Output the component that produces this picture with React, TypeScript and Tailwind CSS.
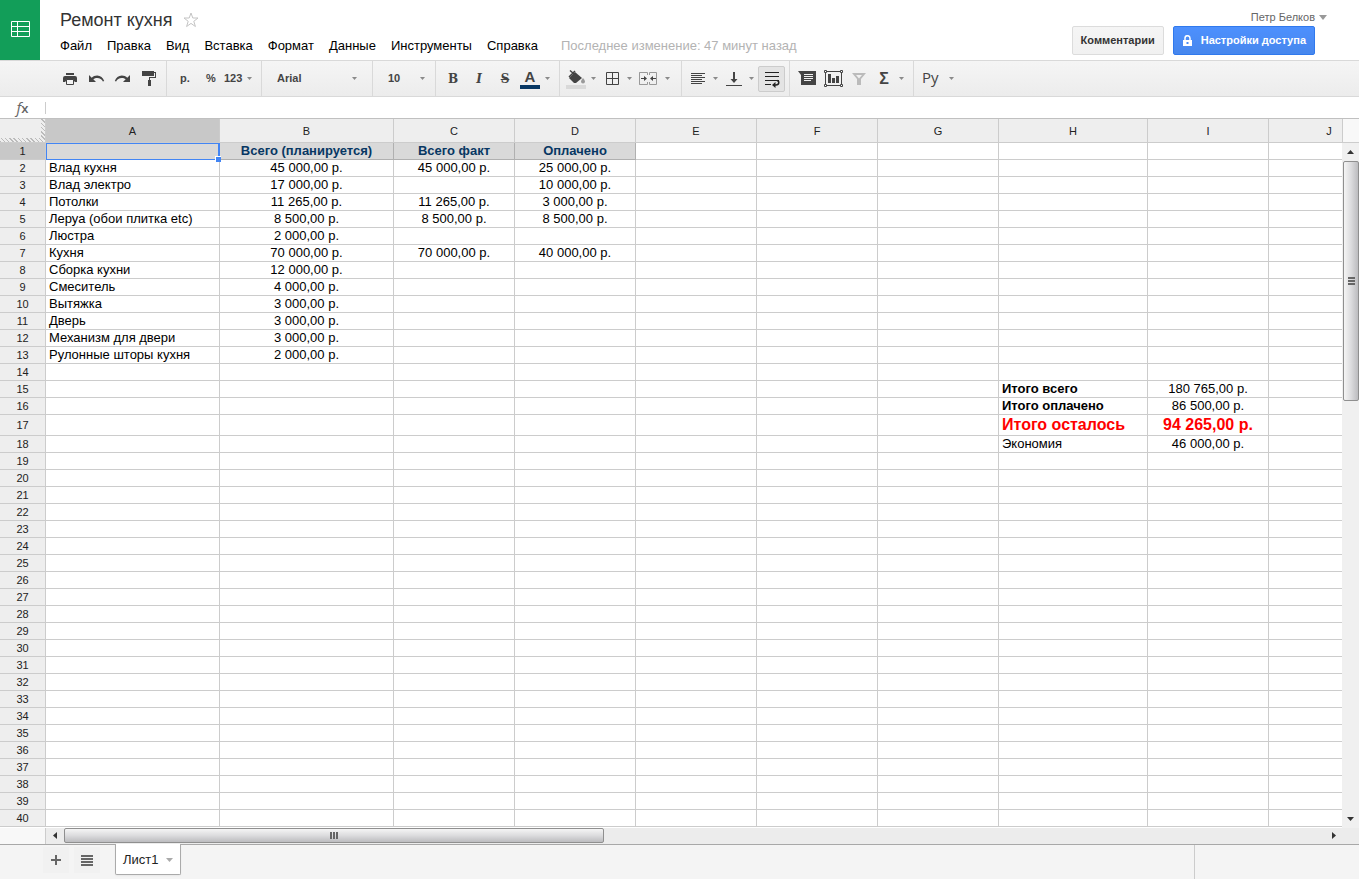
import React from 'react';

const MENU = ['Файл', 'Правка', 'Вид', 'Вставка', 'Формат', 'Данные', 'Инструменты', 'Справка'];

const COLUMNS = [
  { name: 'A', width: 'w-[174px]' },
  { name: 'B', width: 'w-[174px]' },
  { name: 'C', width: 'w-[121px]' },
  { name: 'D', width: 'w-[121px]' },
  { name: 'E', width: 'w-[121px]' },
  { name: 'F', width: 'w-[121px]' },
  { name: 'G', width: 'w-[121px]' },
  { name: 'H', width: 'w-[149px]' },
  { name: 'I', width: 'w-[121px]' },
  { name: 'J', width: 'w-[121px]' },
];

const CELLS: Record<number, Record<string, string>> = {
  1: { B: 'Всего (планируется)', C: 'Всего факт', D: 'Оплачено' },
  2: { A: 'Влад кухня', B: '45 000,00 р.', C: '45 000,00 р.', D: '25 000,00 р.' },
  3: { A: 'Влад электро', B: '17 000,00 р.', D: '10 000,00 р.' },
  4: { A: 'Потолки', B: '11 265,00 р.', C: '11 265,00 р.', D: '3 000,00 р.' },
  5: { A: 'Леруа (обои плитка etc)', B: '8 500,00 р.', C: '8 500,00 р.', D: '8 500,00 р.' },
  6: { A: 'Люстра', B: '2 000,00 р.' },
  7: { A: 'Кухня', B: '70 000,00 р.', C: '70 000,00 р.', D: '40 000,00 р.' },
  8: { A: 'Сборка кухни', B: '12 000,00 р.' },
  9: { A: 'Смеситель', B: '4 000,00 р.' },
  10: { A: 'Вытяжка', B: '3 000,00 р.' },
  11: { A: 'Дверь', B: '3 000,00 р.' },
  12: { A: 'Механизм для двери', B: '3 000,00 р.' },
  13: { A: 'Рулонные шторы кухня', B: '2 000,00 р.' },
  15: { H: 'Итого всего', I: '180 765,00 р.' },
  16: { H: 'Итого оплачено', I: '86 500,00 р.' },
  17: { H: 'Итого осталось', I: '94 265,00 р.' },
  18: { H: 'Экономия', I: '46 000,00 р.' },
};

const ROWS = Array.from({ length: 40 }, (_, i) => i + 1);

const Caret: React.FC = () => (
  <svg width="5" height="3" viewBox="0 0 5 3" className="shrink-0">
    <path d="M0 0h5L2.5 3z" fill="#8a8a8a" />
  </svg>
);

const Icon: React.FC<{ children: React.ReactNode }> = ({ children }) => (
  <svg width="20" height="20" viewBox="0 0 20 20" fill="#444" className="shrink-0">
    {children}
  </svg>
);

const Group: React.FC<{ className: string; children: React.ReactNode }> = ({ className, children }) => (
  <div className={`flex shrink-0 items-center border-r border-[#d9d9d9] ${className}`}>{children}</div>
);

const ToolButton: React.FC<{ label: string; children: React.ReactNode }> = ({ label, children }) => (
  <button aria-label={label} className="flex h-[26px] w-[26px] items-center justify-center">
    {children}
  </button>
);

const DropButton: React.FC<{ label: string; children: React.ReactNode }> = ({ label, children }) => (
  <button aria-label={label} className="flex h-[26px] w-9 items-center justify-between pr-1 pl-0.5">
    {children}
    <Caret />
  </button>
);

const Header: React.FC = () => (
  <header className="flex h-[60px] shrink-0 bg-white">
    <a href="#" aria-label="Таблицы" className="block w-10 bg-[#129e59]">
      <svg width="40" height="60" viewBox="0 0 40 60" fill="none" stroke="#fff">
        <path d="M11.5 21.5h18v15h-18zM17.5 21.5v15M11.5 26.5h18M11.5 31.5h18" />
      </svg>
    </a>
    <div className="flex-1 pt-2.5 pl-5">
      <div className="flex items-center gap-2.5">
        <h1 className="text-lg leading-5 text-[#333]">Ремонт кухня</h1>
        <button aria-label="Пометить">
          <svg width="16" height="16" viewBox="0 0 16 16" fill="none" stroke="#c4c4c4">
            <path d="M8 1l1.8 5h5.2l-4.2 3.3 1.6 5.2L8 11.4l-4.4 3.1 1.6-5.2L1 6h5.2z" />
          </svg>
        </button>
      </div>
      <nav className="mt-2 flex gap-[15px] text-[13px] leading-4 whitespace-nowrap">
        {MENU.map((item) => (
          <button key={item}>{item}</button>
        ))}
        <span className="pl-2 text-[#b3b3b3]">Последнее изменение: 47 минут назад</span>
      </nav>
    </div>
    <div className="flex flex-col items-end pt-2.5 pr-11">
      <button className="-mr-3 flex items-center gap-1 text-[11px] leading-[14px] text-[#666]">
        Петр Белков
        <svg width="8" height="5" viewBox="0 0 8 5">
          <path d="M0 0h8L4 5z" fill="#999" />
        </svg>
      </button>
      <div className="mt-0.5 flex gap-[9px] text-[11px] font-bold">
        <button className="h-[29px] rounded-xs border border-[#dcdcdc] bg-linear-to-b from-[#f5f5f5] to-[#f1f1f1] px-2 text-[#333]">
          Комментарии
        </button>
        <button className="flex h-[29px] items-center gap-2 rounded-xs border border-[#3079ed] bg-linear-to-b from-[#4d90fe] to-[#4787ed] px-2 text-white">
          <svg width="11" height="12" viewBox="0 0 11 12">
            <path d="M3 6V3.2a2.5 2.5 0 0 1 5 0V6" fill="none" stroke="#fff" strokeWidth="1.5" />
            <path d="M1 5h9v6H1zM4.5 7v2h2V7z" fill="#fff" fillRule="evenodd" />
          </svg>
          Настройки доступа
        </button>
      </div>
    </div>
  </header>
);

const Toolbar: React.FC = () => (
  <div className="flex h-[37px] shrink-0 border-y border-[#d9d9d9] bg-linear-to-b from-[#f5f5f5] to-[#ececec] text-[11px] font-bold text-[#444]">
    <Group className="pr-[5px] pl-[57px]">
      <ToolButton label="Печать">
        <Icon>
          <path d="M6 4h8v2H6zM5 7h10a2 2 0 0 1 2 2v4h-2v-3H5v3H3V9a2 2 0 0 1 2-2z" />
          <path d="M3 9h14v3.500H3z" />
          <path d="M6.500 10.500h7v5h-7z" fill="#f4f4f4" stroke="#444" />
        </Icon>
      </ToolButton>
      <ToolButton label="Отменить">
        <Icon>
          <path d="M3 6v7h7L7.300 10.300C8.500 9.400 9.700 8.900 11.200 8.900c2.600 0 4.700 1.300 5.700 3.600l1.300-.5C17 8.700 14.500 6.600 11.200 6.600c-2.200 0-4 .7-5.500 2.100z" />
        </Icon>
      </ToolButton>
      <ToolButton label="Повторить">
        <Icon>
          <path d="M18 6v7h-7l2.700-2.700C12.500 9.400 11.300 8.900 9.800 8.900c-2.600 0-4.700 1.300-5.700 3.600L2.800 12C4 8.700 6.500 6.600 9.800 6.600c2.200 0 4 .7 5.500 2.100z" />
        </Icon>
      </ToolButton>
      <ToolButton label="Копировать форматирование">
        <Icon>
          <path d="M4 2h12v5H4zM16 3h2v6h-6v2h-1V8h6V4h-1zM10 11h3v6h-3z" />
        </Icon>
      </ToolButton>
    </Group>
    <Group className="px-[5px]">
      <ToolButton label="Денежный формат">р.</ToolButton>
      <ToolButton label="Процентный формат">%</ToolButton>
      <button className="flex h-[26px] w-8 items-center justify-between pr-1">
        123
        <Caret />
      </button>
    </Group>
    <Group className="px-[5px]">
      <div className="relative flex w-[100px] items-center">
        <select aria-label="Шрифт" className="h-[26px] w-full appearance-none pl-2.5">
          <option>Arial</option>
        </select>
        <span className="pointer-events-none absolute right-2.5">
          <Caret />
        </span>
      </div>
    </Group>
    <Group className="px-[5px]">
      <div className="relative flex w-[52px] items-center">
        <select aria-label="Размер шрифта" className="h-[26px] w-full appearance-none pl-2.5">
          <option>10</option>
        </select>
        <span className="pointer-events-none absolute right-[5px]">
          <Caret />
        </span>
      </div>
    </Group>
    <Group className="pr-[5px] pl-1">
      <ToolButton label="Полужирный">
        <span className="font-['DejaVu_Serif',serif] text-xs">B</span>
      </ToolButton>
      <ToolButton label="Курсив">
        <span className="font-['DejaVu_Serif',serif] text-xs italic">I</span>
      </ToolButton>
      <ToolButton label="Зачеркнутый">
        <span className="font-['DejaVu_Serif',serif] text-xs line-through">S</span>
      </ToolButton>
      <DropButton label="Цвет текста">
        <span className="w-5 border-b-4 border-[#073763] text-center text-[15px] leading-4">A</span>
      </DropButton>
    </Group>
    <Group className="pr-[5px] pl-1">
      <DropButton label="Цвет заливки">
        <Icon>
          <path d="M4 1.500l7 6M9 2L3 8" fill="none" stroke="#444" strokeWidth="1.500" />
          <path d="M9 3l7 6-6 5H8L3 9z" />
          <path d="M17 9c1.500 2 2 2.800 2 3.600a2 2 0 0 1-4 0c0-.8.500-1.600 2-3.600z" fill="#999" />
          <path d="M0 16h20v4H0z" fill="#d9d9d9" />
        </Icon>
      </DropButton>
      <DropButton label="Границы">
        <Icon>
          <path d="M4.500 3.500h12v12h-12zM10.500 3.500v12M4.500 9.500h12" fill="none" stroke="#444" />
        </Icon>
      </DropButton>
      <button aria-label="Объединить ячейки" className="flex h-[26px] w-10 items-center justify-between pr-1.5 pl-0.5">
        <Icon>
          <path d="M9.500 6V3.500h-8V6M1.500 13v2.500h8V13M1.500 3.500v12M18.500 3.500v12M18.500 3.500h-7V6M11.500 13v2.500h7" fill="none" stroke="#999" />
          <path d="M3 9h3V7l3 2.500L6 12v-2H3zM18 9h-3V7l-3 2.500 3 2.500v-2h3z" />
        </Icon>
        <Caret />
      </button>
    </Group>
    <Group className="px-1">
      <DropButton label="Выравнивание по горизонтали">
        <Icon>
          <path d="M3 4h14v1H3zM3 6h11v1H3zM3 8h14v1H3zM3 10h11v1H3zM3 12h14v1H3zM3 14h11v1H3z" />
        </Icon>
      </DropButton>
      <DropButton label="Выравнивание по вертикали">
        <Icon>
          <path d="M9 3h2v7h2.500L10 14l-3.500-4H9zM2 16h16v1H2z" />
        </Icon>
      </DropButton>
      <button
        aria-label="Перенос текста"
        className="flex h-[26px] w-[27px] items-center justify-center rounded-xs border border-[#ccc] bg-[#e4e4e4]"
      >
        <Icon>
          <path d="M3 3h14v1H3zM3 7h14v1H3zM3 11h14v1H3zM3 15h6v1H3z" fill="#222" />
          <path d="M15 11.500c2.500.500 2.500 4.500-1 4.500h-2" fill="none" stroke="#222" strokeWidth="1.500" />
          <path d="M13.500 13v6l-3.500-3z" fill="#222" />
        </Icon>
      </button>
    </Group>
    <Group className="pr-[5px] pl-1">
      <ToolButton label="Комментарий">
        <Icon>
          <path d="M1 2h18v14H4V6zM7 5v1h9V5zM7 7v1h9V7zM7 9v1h9V9zM7 11v1h7v-1z" fillRule="evenodd" />
        </Icon>
      </ToolButton>
      <ToolButton label="Диаграмма">
        <Icon>
          <path d="M2.500 2.500h16v14h-16z" fill="none" stroke="#444" />
          <path d="M5 5h3v9H5zM9 9h3v5H9zM13 7h3v7h-3z" />
          <path d="M1.500 1.500h2v2h-2zM17.500 1.500h2v2h-2zM1.500 15.500h2v2h-2zM17.500 15.500h2v2h-2z" fill="#fff" stroke="#444" />
        </Icon>
      </ToolButton>
      <ToolButton label="Фильтр">
        <Icon>
          <path d="M3 4h14l-5 6v6H8v-6zM7 6l3 3.500L13 6z" fill="#bbb" fillRule="evenodd" />
        </Icon>
      </ToolButton>
      <DropButton label="Функции">
        <span className="w-5 text-center text-base">Σ</span>
      </DropButton>
    </Group>
    <div className="flex items-center pl-[5px]">
      <button aria-label="Способ ввода" className="flex h-[26px] w-[39px] items-center justify-between pr-1 pl-[3px]">
        <span className="pb-1 font-['Open_Sans',sans-serif] text-[15px] leading-5 font-medium">Ру</span>
        <Caret />
      </button>
    </div>
  </div>
);

const FormulaBar: React.FC = () => (
  <div className="flex h-[22px] shrink-0 items-center border-b border-[#c0c0c0] bg-white">
    <label htmlFor="formula" className="w-[45px] text-center font-['Open_Sans',sans-serif] text-[15px] leading-5 text-[#666]">
      <i>f</i>
      <span className="text-[13px] font-semibold">x</span>
    </label>
    <input id="formula" className="h-3 flex-1 border-l border-[#ccc] px-1 text-[13px] outline-none" />
  </div>
);

const cellStyle = (row: number, col: string) => {
  const align = col === 'A' || col === 'H' ? 'text-left' : 'text-center';
  if (row === 1 && col <= 'D') {
    return 'border-[#b0b0b0] bg-[#d9d9d9] text-center font-bold text-[#073763]';
  }
  if (row === 17) return `border-[#ccc] text-base leading-5 font-bold text-[#f00] ${align}`;
  if (col === 'H' && (row === 15 || row === 16)) return `border-[#ccc] font-bold ${align}`;
  return `border-[#ccc] ${align}`;
};

const Sheet: React.FC = () => (
  <div className="min-w-0 flex-1 overflow-hidden bg-white">
    <table className="w-[1390px] table-fixed border-separate border-spacing-0 text-[13px] leading-4 whitespace-nowrap">
      <thead className="text-[11px] text-[#222]">
        <tr>
          <th className="h-6 w-[46px] border-r border-b border-[#ccc] bg-[repeating-linear-gradient(45deg,#bbb_0_1px,#eee_1px_3px)] p-0 pr-1 pb-1">
            <div className="h-[19px] bg-[#eee]" />
          </th>
          {COLUMNS.map(({ name, width }) => (
            <th
              key={name}
              scope="col"
              className={`h-6 border-r border-b border-[#ccc] p-0 font-normal ${width} ${name === 'A' ? 'bg-[#c8c8c8]' : 'bg-[#eee]'}`}
            >
              {name}
            </th>
          ))}
        </tr>
      </thead>
      <tbody>
        {ROWS.map((row) => (
          <tr key={row}>
            <th
              scope="row"
              className={`border-r border-b border-[#ccc] p-0 text-[11px] leading-4 font-normal text-[#222] ${row === 17 ? 'h-[21px]' : 'h-[17px]'} ${row === 1 ? 'bg-[#c8c8c8]' : 'bg-[#eee]'}`}
            >
              {row}
            </th>
            {COLUMNS.map(({ name }) => (
              <td key={name} className={`relative border-r border-b px-[3px] py-0 ${cellStyle(row, name)}`}>
                {CELLS[row]?.[name]}
                {row === 1 && name === 'A' && (
                  <div className="absolute inset-0 -right-px -bottom-px z-10 border border-r-2 border-[#4285f4]">
                    <div className="absolute -right-[3px] -bottom-[3px] h-1.5 w-1.5 border-t border-l border-white bg-[#4285f4]" />
                  </div>
                )}
              </td>
            ))}
          </tr>
        ))}
      </tbody>
    </table>
  </div>
);

const VerticalScroll: React.FC = () => (
  <div className="flex w-[17px] shrink-0 flex-col bg-[#f0f0f0]">
    <div className="h-6 border-b border-l border-[#ccc] bg-[#f8f8f8]" />
    <button aria-label="Вверх" className="flex h-[18px] items-center justify-center">
      <svg width="7" height="4" viewBox="0 0 7 4">
        <path d="M3.500 0L7 4H0z" fill="#333" />
      </svg>
    </button>
    <div className="flex-1 pl-px">
      <div className="flex h-[37%] items-center justify-center rounded-xs border border-[#8f8f8f] bg-linear-to-r from-[#f5f5f5] via-[#dcdcde] to-[#bcbcbf]">
        <svg width="7" height="8" viewBox="0 0 7 8">
          <path d="M0 0h7v2H0zM0 3h7v2H0zM0 6h7v2H0z" fill="#666" />
        </svg>
      </div>
    </div>
    <button aria-label="Вниз" className="flex h-[18px] items-center justify-center">
      <svg width="7" height="4" viewBox="0 0 7 4">
        <path d="M0 0h7L3.500 4z" fill="#333" />
      </svg>
    </button>
  </div>
);

const HorizontalScroll: React.FC = () => (
  <div className="flex h-[17px] shrink-0 border-b border-[#a8a8a8] bg-[#ececec]">
    <div className="w-[46px] border-r border-[#ccc] bg-[#f8f8f8]" />
    <button aria-label="Влево" className="flex h-[15px] w-[18px] items-center justify-center">
      <svg width="4" height="7" viewBox="0 0 4 7">
        <path d="M4 0v7L0 3.500z" fill="#333" />
      </svg>
    </button>
    <div className="flex-1">
      <div className="flex h-[15px] w-3/7 items-center justify-center rounded-xs border border-[#8f8f8f] bg-linear-to-b from-[#f5f5f5] via-[#dcdcde] to-[#bcbcbf]">
        <svg width="8" height="7" viewBox="0 0 8 7">
          <path d="M0 0h2v7H0zM3 0h2v7H3zM6 0h2v7H6z" fill="#666" />
        </svg>
      </div>
    </div>
    <button aria-label="Вправо" className="mr-4 flex h-[15px] w-[18px] items-center justify-center">
      <svg width="4" height="7" viewBox="0 0 4 7">
        <path d="M0 0l4 3.500L0 7z" fill="#333" />
      </svg>
    </button>
  </div>
);

const SheetTabs: React.FC = () => (
  <footer className="flex h-[34px] shrink-0 bg-[#f4f4f4]">
    <div className="flex gap-[5px] pt-0.5 pl-[43px]">
      <button aria-label="Добавить лист" className="flex h-[26px] w-[26px] items-center justify-center bg-[#f1f1f1]">
        <svg width="10" height="10" viewBox="0 0 10 10">
          <path d="M4 0h2v4h4v2H6v4H4V6H0V4h4z" fill="#666" />
        </svg>
      </button>
      <button aria-label="Все листы" className="flex h-[26px] w-[26px] items-center justify-center bg-[#f1f1f1]">
        <svg width="12" height="11" viewBox="0 0 12 11">
          <path d="M0 0h12v2H0zM0 3h12v2H0zM0 6h12v2H0zM0 9h12v2H0z" fill="#666" />
        </svg>
      </button>
    </div>
    <button className="-mt-px ml-[15px] flex h-[31px] w-[66px] items-center justify-between rounded-b-xs border border-t-0 border-[#aaa] bg-white px-[7px] pt-0.5 text-[13px] text-[#222] shadow-xs">
      Лист1
      <svg width="7" height="4" viewBox="0 0 7 4">
        <path d="M0 0h7L3.500 4z" fill="#aaa" />
      </svg>
    </button>
    <div className="ml-auto w-[165px] border-l border-[#ccc]" />
  </footer>
);

const App: React.FC = () => (
  <div className="flex h-screen flex-col overflow-hidden bg-white font-['Liberation_Sans',Arial,sans-serif] text-black">
    <Header />
    <Toolbar />
    <FormulaBar />
    <main className="flex min-h-0 flex-1">
      <Sheet />
      <VerticalScroll />
    </main>
    <HorizontalScroll />
    <SheetTabs />
  </div>
);

export default App;
